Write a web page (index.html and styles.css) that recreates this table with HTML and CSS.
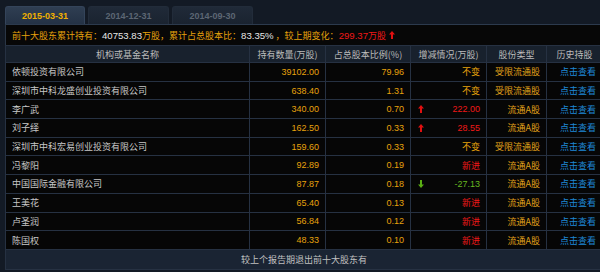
FILE: index.html
```html
<!DOCTYPE html>
<html lang="zh-CN">
<head>
<meta charset="utf-8">
<title>十大股东</title>
<link rel="stylesheet" href="styles.css">
</head>
<body>
<div class="tabs">
  <div class="tab active">2015-03-31</div>
  <div class="tab">2014-12-31</div>
  <div class="tab">2014-09-30</div>
</div>
<div class="panel">
  <div class="summary">
    <span class="gold">前十大股东累计持有：</span><span class="num white">40753.83</span><span class="gold">万股，累计占总股本比：</span><span class="num white">83.35%</span><span class="gold"> ，较上期变化：</span><span class="red"><span class="num">299.37</span>万股</span>
    <svg class="arrow" viewBox="0 0 6 8" width="6" height="8"><polygon points="3,0 6,3.6 4,3.6 4,8 2,8 2,3.6 0,3.6" fill="#e01010"/></svg>
  </div>
  <table class="holders">
    <colgroup>
      <col class="c-name"><col class="c-amt"><col class="c-pct"><col class="c-chg"><col class="c-type"><col class="c-hist">
    </colgroup>
    <thead>
      <tr><th>机构或基金名称</th><th>持有数量(万股)</th><th>占总股本比例(%)</th><th>增减情况(万股)</th><th>股份类型</th><th>历史持股</th></tr>
    </thead>
    <tbody>
      <tr><td class="name">依顿投资有限公司</td><td class="num gold">39102.00</td><td class="num gold">79.96</td><td class="chg"><span class="gold">不变</span></td><td class="type">受限流通股</td><td class="hist">点击查看</td></tr>
      <tr><td class="name">深圳市中科龙盛创业投资有限公司</td><td class="num gold">638.40</td><td class="num gold">1.31</td><td class="chg"><span class="gold">不变</span></td><td class="type">受限流通股</td><td class="hist">点击查看</td></tr>
      <tr><td class="name">李广武</td><td class="num gold">340.00</td><td class="num gold">0.70</td><td class="chg"><div class="chg-box"><svg viewBox="0 0 6 8" width="6" height="8"><polygon points="3,0 6,3.6 4,3.6 4,8 2,8 2,3.6 0,3.6" fill="#e01010"/></svg><span class="num red">222.00</span></div></td><td class="type">流通A股</td><td class="hist">点击查看</td></tr>
      <tr><td class="name">刘子绎</td><td class="num gold">162.50</td><td class="num gold">0.33</td><td class="chg"><div class="chg-box"><svg viewBox="0 0 6 8" width="6" height="8"><polygon points="3,0 6,3.6 4,3.6 4,8 2,8 2,3.6 0,3.6" fill="#e01010"/></svg><span class="num red">28.55</span></div></td><td class="type">流通A股</td><td class="hist">点击查看</td></tr>
      <tr><td class="name">深圳市中科宏易创业投资有限公司</td><td class="num gold">159.60</td><td class="num gold">0.33</td><td class="chg"><span class="gold">不变</span></td><td class="type">受限流通股</td><td class="hist">点击查看</td></tr>
      <tr><td class="name">冯黎阳</td><td class="num gold">92.89</td><td class="num gold">0.19</td><td class="chg"><span class="red">新进</span></td><td class="type">流通A股</td><td class="hist">点击查看</td></tr>
      <tr><td class="name">中国国际金融有限公司</td><td class="num gold">87.87</td><td class="num gold">0.18</td><td class="chg"><div class="chg-box"><svg viewBox="0 0 6 8" width="6" height="8"><polygon points="3,8 6,4.4 4,4.4 4,0 2,0 2,4.4 0,4.4" fill="#5aae14"/></svg><span class="num green">-27.13</span></div></td><td class="type">流通A股</td><td class="hist">点击查看</td></tr>
      <tr><td class="name">王美花</td><td class="num gold">65.40</td><td class="num gold">0.13</td><td class="chg"><span class="red">新进</span></td><td class="type">流通A股</td><td class="hist">点击查看</td></tr>
      <tr><td class="name">卢圣润</td><td class="num gold">56.84</td><td class="num gold">0.12</td><td class="chg"><span class="red">新进</span></td><td class="type">流通A股</td><td class="hist">点击查看</td></tr>
      <tr><td class="name">陈国权</td><td class="num gold">48.33</td><td class="num gold">0.10</td><td class="chg"><span class="red">新进</span></td><td class="type">流通A股</td><td class="hist">点击查看</td></tr>
    </tbody>
    <tfoot>
      <tr><td colspan="6" class="foot">较上个报告期退出前十大股东有</td></tr>
    </tfoot>
  </table>
</div>
</body>
</html>
```
FILE: styles.css
```css
html, body {
  margin: 0;
  padding: 0;
}
body {
  width: 600px;
  height: 272px;
  overflow: hidden;
  background: #131a25;
  font-family: "Noto Sans CJK SC", "Noto Sans", sans-serif;
  font-size: 9px;
  color: #c4c4c4;
}
.tabs {
  display: flex;
  gap: 3px;
  padding: 6px 0 0 5px;
  height: 18px;
}
.tab {
  width: 81px;
  height: 18px;
  box-sizing: border-box;
  border-radius: 3px 3px 0 0;
  background: linear-gradient(#202a38, #1a2330);
  border: 1px solid #222c3a;
  border-bottom: none;
  color: #5c6673;
  font-family: "Liberation Sans", Arial, sans-serif;
  font-weight: bold;
  font-size: 9px;
  display: flex;
  align-items: center;
  justify-content: center;
}
.tab.active {
  width: 80px;
  background: linear-gradient(#2f3e52, #243245);
  border-color: #34445a;
  color: #f0b000;
}
.panel {
  margin-left: 5px;
  width: 597px;
  border-top: 1px solid #2c3a4d;
}
.summary {
  height: 20px;
  box-sizing: border-box;
  background: #070707;
  border-left: 1px solid #2a3646;
  padding-left: 6px;
  display: flex;
  align-items: center;
  white-space: pre;
  font-size: 9px;
}
.summary .num {
  font-family: "Liberation Sans", Arial, sans-serif;
  font-size: 9.6px;
}
.summary .arrow {
  margin-left: 3px;
}
.gold { color: #e6a20c; }
.white { color: #e6e6e6; }
.red { color: #f01818; }
.green { color: #68b820; }

.holders {
  width: 597px;
  table-layout: fixed;
  border-collapse: collapse;
}
.c-name { width: 244px; }
.c-amt { width: 76px; }
.c-pct { width: 85px; }
.c-chg { width: 76px; }
.c-type { width: 60px; }
.c-hist { width: 56px; }

.holders th,
.holders td {
  border: 1px solid #263142;
  padding: 0 6px;
  white-space: nowrap;
  overflow: hidden;
}
.holders th {
  height: 16px;
  background: #18212d;
  color: #bcbcbc;
  font-weight: normal;
  text-align: center;
  font-size: 9px;
}
.holders td {
  height: 17.7px;
  background: #060606;
  text-align: right;
}
.holders td.name {
  text-align: left;
  color: #c8c8c8;
  padding-left: 6px;
}
.holders td.num {
  font-family: "Liberation Sans", Arial, sans-serif;
  font-size: 9px;
}
.chg-box {
  display: flex;
  align-items: center;
  justify-content: space-between;
  padding-left: 1px;
}
.chg-box .num {
  font-family: "Liberation Sans", Arial, sans-serif;
  font-size: 9px;
}
.holders td.type {
  color: #e0a21a;
}
.holders td.hist {
  color: #1f88d6;
}
.holders td.foot {
  height: 19px;
  background: #1a2433;
  text-align: center;
  color: #c0c0c0;
}
```
